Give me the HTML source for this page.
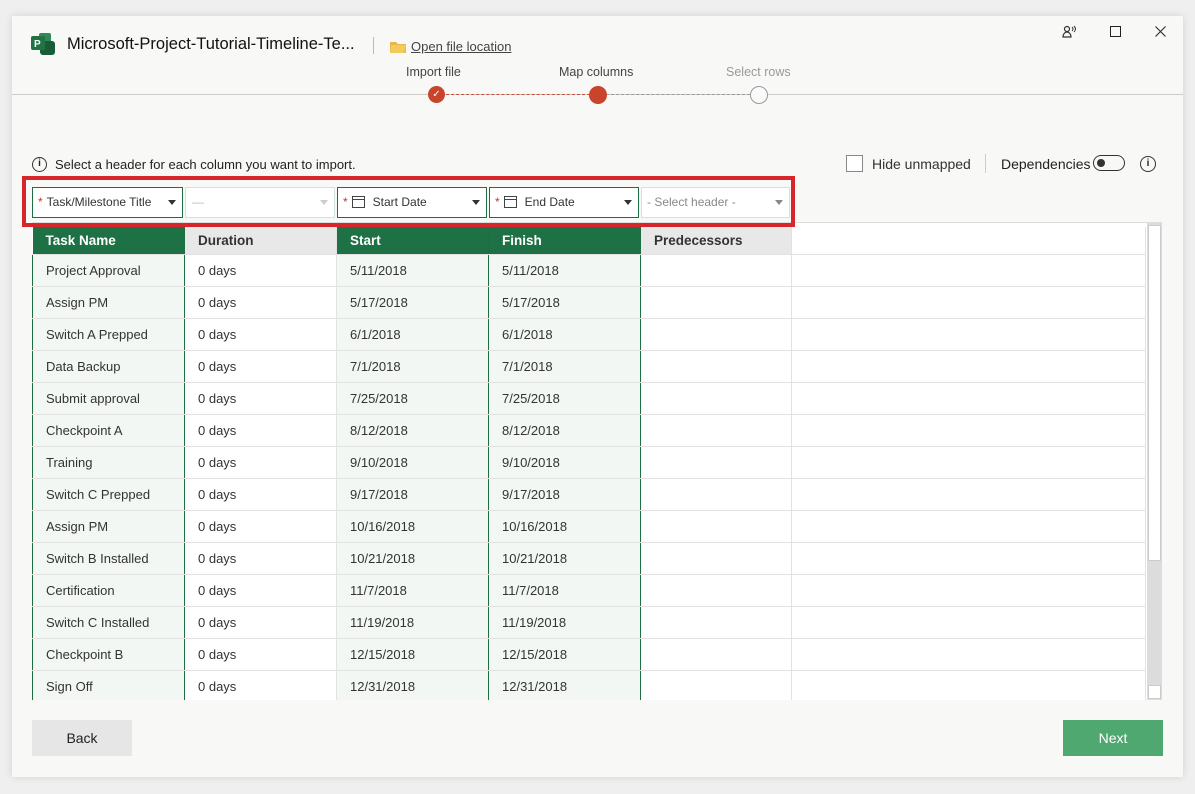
<!DOCTYPE html>
<html><head><meta charset="utf-8"><style>
*{box-sizing:border-box;margin:0;padding:0}
body{width:1195px;height:794px;background:#efefef;font-family:"Liberation Sans",sans-serif;position:relative;overflow:hidden;color:#222}
.win{position:absolute;left:12px;top:16px;width:1171px;height:761px;background:#f8f8f7;box-shadow:0 0 8px rgba(0,0,0,.12)}
.abs{position:absolute}
.title{left:67px;top:35px;font-size:16.5px;color:#111}
.sep{left:373px;top:37px;width:1px;height:17px;background:#bbb}
.open{left:411px;top:39px;font-size:13px;color:#444;text-decoration:underline}
.step{font-size:12.5px;color:#444}
.hline{left:12px;top:94px;width:1171px;height:1px;background:#ccc}
.dash{top:94px;height:0;border-top:1.5px dashed #c8503a}
.dd{position:absolute;top:187px;height:31px;background:#fff;border:1px solid #1e6e44;font-size:12px;color:#333;line-height:29px;z-index:3}
.dd .arr{position:absolute;right:6px;top:12px;width:0;height:0;border-left:4px solid transparent;border-right:4px solid transparent;border-top:5px solid #333}
.star{color:#c33;margin-left:5px;margin-right:4px}
.cal{display:inline-block;width:13px;height:12px;border:1.3px solid #444;vertical-align:-2px;margin-right:8px;position:relative}
.cal:before{content:"";position:absolute;left:0;right:0;top:2px;border-top:1.3px solid #444}
table{position:absolute;left:0;top:4px;border-collapse:collapse;font-size:13px;table-layout:fixed;width:1114px}
td,th{height:32px;text-align:left;padding-left:13px;border-bottom:1px solid #e2e2e2;border-right:1px solid #e2e2e2;color:#333;font-weight:normal;white-space:nowrap;overflow:hidden}
th{height:27px;font-weight:bold;font-size:13.5px}
th.g{background:#1e7145;color:#fff;border-right:1px solid #1e6e44}
th.n{background:#e8e8e8;color:#333}
td.g{background:#f3f7f3;border-left:1px solid #1e6e44;border-right:1px solid #1e6e44}
td.w{background:#fff}
</style></head><body>
<div class="win"></div>
<svg class="abs" style="left:30px;top:31px" width="28" height="26"><rect x="9" y="2" width="12" height="10" rx="2" fill="#2f8a57"/><rect x="10" y="10" width="15" height="14" rx="3" fill="#1a5c38"/><rect x="1" y="5" width="14" height="14" rx="2" fill="#217346"/><text x="4" y="16" font-size="10" font-weight="bold" fill="#fff" font-family="Liberation Sans">P</text></svg>
<div class="abs title">Microsoft-Project-Tutorial-Timeline-Te...</div>
<div class="abs sep"></div>
<svg class="abs" style="left:390px;top:40px" width="16" height="13"><path d="M0 2h6l2 2h8v9H0z" fill="#e8b64a"/><path d="M1 5h15l-2 8H0z" fill="#f5c95b"/></svg>
<div class="abs open">Open file location</div>
<svg class="abs" style="left:1062px;top:25px" width="14" height="14"><circle cx="5" cy="4" r="2.5" fill="none" stroke="#333" stroke-width="1.2"/><path d="M1 12c0-3 2-5 4-5s4 2 4 5z" fill="none" stroke="#333" stroke-width="1.2"/><path d="M10 2q2 2 0 4M12 1q3 3 0 6" fill="none" stroke="#333"/></svg>
<div class="abs" style="left:1110px;top:26px;width:11px;height:11px;border:1.3px solid #222"></div>
<svg class="abs" style="left:1155px;top:26px" width="11" height="11"><path d="M0.5 0.5L10.5 10.5M10.5 0.5L0.5 10.5" stroke="#333" stroke-width="1.2"/></svg>
<div class="abs step" style="left:406px;top:65px">Import file</div>
<div class="abs step" style="left:559px;top:65px">Map columns</div>
<div class="abs step" style="left:726px;top:65px;color:#999">Select rows</div>
<div class="abs hline"></div>
<div class="abs dash" style="left:446px;width:144px"></div>
<div class="abs dash" style="left:606px;width:144px;border-top-color:#999"></div>
<div class="abs" style="left:428px;top:86px;width:17px;height:17px;border-radius:50%;background:#c8452b;color:#fff;font-size:10px;text-align:center;line-height:17px">✓</div>
<div class="abs" style="left:589px;top:86px;width:18px;height:18px;border-radius:50%;background:#c8452b"></div>
<div class="abs" style="left:750px;top:86px;width:18px;height:18px;border-radius:50%;border:1.3px solid #999;background:#fafafa"></div>
<div class="abs" style="left:32px;top:157px;width:15px;height:15px;border:1.3px solid #333;border-radius:50%;font-size:10px;font-weight:bold;text-align:center;line-height:12px">i</div>
<div class="abs" style="left:55px;top:157px;font-size:13px;color:#222">Select a header for each column you want to import.</div>
<div class="abs" style="left:846px;top:155px;width:17px;height:17px;border:1px solid #888;background:#fff"></div>
<div class="abs" style="left:872px;top:156px;font-size:14px;color:#333">Hide unmapped</div>
<div class="abs" style="left:985px;top:154px;width:1px;height:19px;background:#ccc"></div>
<div class="abs" style="left:1001px;top:156px;font-size:14px;color:#222">Dependencies</div>
<div class="abs" style="left:1093px;top:155px;width:32px;height:16px;border:1.3px solid #333;border-radius:8px"><div style="position:absolute;left:3px;top:3px;width:8px;height:8px;border-radius:50%;background:#333"></div></div>
<div class="abs" style="left:1140px;top:156px;width:16px;height:16px;border:1.3px solid #333;border-radius:50%;font-size:10px;font-weight:bold;text-align:center;line-height:13px">i</div>
<div class="abs" style="left:22px;top:176px;width:773px;height:51px;border:4px solid #d7262b;z-index:5"></div>
<div class="dd" style="left:32px;width:151px"><span class="star">*</span>Task/Milestone Title<span class="arr"></span></div>
<div class="dd" style="left:185px;width:150px;border-color:#cfe3d6;color:#bbb"><span style="margin-left:6px">—</span><span class="arr" style="border-top-color:#ccc"></span></div>
<div class="dd" style="left:337px;width:150px"><span class="star">*</span><span class="cal"></span>Start Date<span class="arr"></span></div>
<div class="dd" style="left:489px;width:150px"><span class="star">*</span><span class="cal"></span>End Date<span class="arr"></span></div>
<div class="dd" style="left:641px;width:149px;border-color:#ddd;color:#888"><span style="margin-left:5px">- Select header -</span><span class="arr" style="border-top-color:#888"></span></div>
<div class="abs" style="left:32px;top:222px;width:1130px;height:478px;background:#fff;overflow:hidden;border-top:1px solid #ddd">
<table>
<colgroup><col style="width:152px"><col style="width:152px"><col style="width:152px"><col style="width:152px"><col style="width:151px"><col></colgroup>
<tr><th class="g">Task Name</th><th class="n">Duration</th><th class="g">Start</th><th class="g">Finish</th><th class="n">Predecessors</th><th></th></tr>
<tr><td class="g">Project Approval</td><td class="w">0 days</td><td class="g">5/11/2018</td><td class="g">5/11/2018</td><td class="w"></td><td></td></tr>
<tr><td class="g">Assign PM</td><td class="w">0 days</td><td class="g">5/17/2018</td><td class="g">5/17/2018</td><td class="w"></td><td></td></tr>
<tr><td class="g">Switch A Prepped</td><td class="w">0 days</td><td class="g">6/1/2018</td><td class="g">6/1/2018</td><td class="w"></td><td></td></tr>
<tr><td class="g">Data Backup</td><td class="w">0 days</td><td class="g">7/1/2018</td><td class="g">7/1/2018</td><td class="w"></td><td></td></tr>
<tr><td class="g">Submit approval</td><td class="w">0 days</td><td class="g">7/25/2018</td><td class="g">7/25/2018</td><td class="w"></td><td></td></tr>
<tr><td class="g">Checkpoint A</td><td class="w">0 days</td><td class="g">8/12/2018</td><td class="g">8/12/2018</td><td class="w"></td><td></td></tr>
<tr><td class="g">Training</td><td class="w">0 days</td><td class="g">9/10/2018</td><td class="g">9/10/2018</td><td class="w"></td><td></td></tr>
<tr><td class="g">Switch C Prepped</td><td class="w">0 days</td><td class="g">9/17/2018</td><td class="g">9/17/2018</td><td class="w"></td><td></td></tr>
<tr><td class="g">Assign PM</td><td class="w">0 days</td><td class="g">10/16/2018</td><td class="g">10/16/2018</td><td class="w"></td><td></td></tr>
<tr><td class="g">Switch B Installed</td><td class="w">0 days</td><td class="g">10/21/2018</td><td class="g">10/21/2018</td><td class="w"></td><td></td></tr>
<tr><td class="g">Certification</td><td class="w">0 days</td><td class="g">11/7/2018</td><td class="g">11/7/2018</td><td class="w"></td><td></td></tr>
<tr><td class="g">Switch C Installed</td><td class="w">0 days</td><td class="g">11/19/2018</td><td class="g">11/19/2018</td><td class="w"></td><td></td></tr>
<tr><td class="g">Checkpoint B</td><td class="w">0 days</td><td class="g">12/15/2018</td><td class="g">12/15/2018</td><td class="w"></td><td></td></tr>
<tr><td class="g">Sign Off</td><td class="w">0 days</td><td class="g">12/31/2018</td><td class="g">12/31/2018</td><td class="w"></td><td></td></tr>
</table>
<div class="abs" style="left:1115px;top:0;width:15px;height:478px;background:#dcdcdc"><div style="position:absolute;left:1px;top:2px;width:13px;height:336px;background:#fff;border:1px solid #ccc"></div><div style="position:absolute;left:1px;bottom:2px;width:13px;height:14px;background:#fff;border:1px solid #ccc"></div></div>
</div>
<div class="abs" style="left:32px;top:720px;width:100px;height:36px;background:#e6e6e6;font-size:14px;text-align:center;line-height:36px;color:#222">Back</div>
<div class="abs" style="left:1063px;top:720px;width:100px;height:36px;background:#4fa870;font-size:14px;text-align:center;line-height:36px;color:#fff">Next</div>
</body></html>
